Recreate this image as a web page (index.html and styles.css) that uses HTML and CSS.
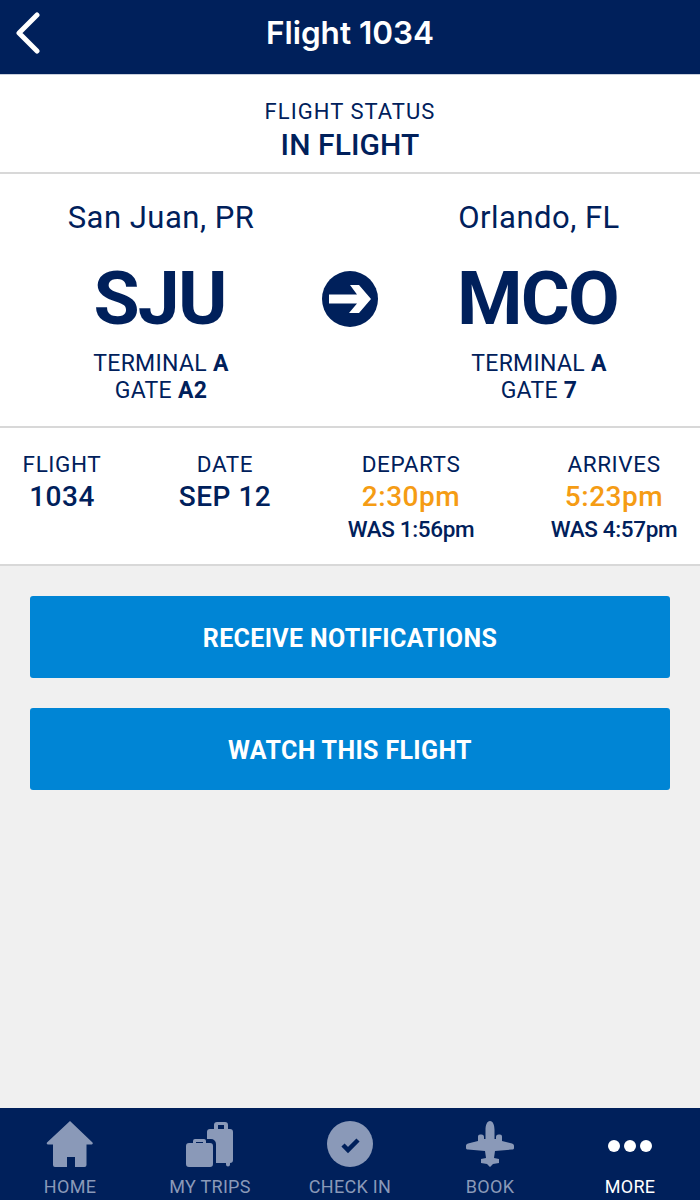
FILE: index.html
```html
<!DOCTYPE html>
<html lang="en">
<head>
<meta charset="utf-8">
<title>Flight 1034</title>
<link rel="stylesheet" href="styles.css">
</head>
<body>
<div class="app">
  <header class="topbar">
    <svg class="back" width="26" height="42" viewBox="0 0 26 42"><path d="M23 3 L5 21 L23 39" fill="none" stroke="#fff" stroke-width="5" stroke-linecap="round" stroke-linejoin="round"/></svg>
    <h1 class="title">Flight 1034</h1>
  </header>
  <section class="status">
    <div class="status-label">FLIGHT STATUS</div>
    <div class="status-value">IN FLIGHT</div>
  </section>
  <section class="route">
    <div class="place">
      <div class="city">San Juan, PR</div>
      <div class="code">SJU</div>
      <div class="gate">TERMINAL <b>A</b></div>
      <div class="gate">GATE <b>A2</b></div>
    </div>
    <svg class="arrow" width="56" height="56" viewBox="0 0 56 56"><circle cx="28" cy="28" r="28" fill="#00205b"/><path d="M7 23.500H35L28 14H37L49 28 37 42H27L35 32.500H7Z" fill="#fff"/></svg>
    <div class="place">
      <div class="city">Orlando, FL</div>
      <div class="code">MCO</div>
      <div class="gate">TERMINAL <b>A</b></div>
      <div class="gate">GATE <b>7</b></div>
    </div>
  </section>
  <section class="details">
    <div class="col col-flight">
      <div class="label">FLIGHT</div>
      <div class="value">1034</div>
    </div>
    <div class="col col-date">
      <div class="label">DATE</div>
      <div class="value">SEP 12</div>
    </div>
    <div class="col col-dep">
      <div class="label">DEPARTS</div>
      <div class="value late">2:30pm</div>
      <div class="was">WAS 1:56pm</div>
    </div>
    <div class="col col-arr">
      <div class="label">ARRIVES</div>
      <div class="value late">5:23pm</div>
      <div class="was">WAS 4:57pm</div>
    </div>
  </section>
  <main class="actions">
    <button class="btn">RECEIVE NOTIFICATIONS</button>
    <button class="btn">WATCH THIS FLIGHT</button>
  </main>
  <nav class="tabs">
    <div class="tab">
      <svg class="icon" width="50" height="48" viewBox="0 0 50 48"><path d="M25 1 47.500 22.500a1.200 1.200 0 0 1-1 2H41.500V45a2 2 0 0 1-2 2H30V37H22V47H10a2 2 0 0 1-2-2V24.500H3a1.200 1.200 0 0 1-1-2Z" fill="#8a99b8"/></svg>
      <span>HOME</span>
    </div>
    <div class="tab">
      <svg class="icon" width="50" height="48" viewBox="0 0 50 48"><path fill-rule="evenodd" d="M32 2h8a3 3 0 0 1 3 3v4h2a3 3 0 0 1 3 3v28a3 3 0 0 1-3 3v1.500a2 2 0 0 1-4 0V43H31V24a5 5 0 0 0-5-5h-4v-7a3 3 0 0 1 3-3h4V5a3 3 0 0 1 3-3Zm1 3v4h6V5Z" fill="#8a99b8"/><path fill-rule="evenodd" d="M8 23v-2a2 2 0 0 1 2-2h9a2 2 0 0 1 2 2v2h4a3 3 0 0 1 3 3v18a3 3 0 0 1-3 3H4a3 3 0 0 1-3-3V26a3 3 0 0 1 3-3Zm3-1v1h7v-1Z" fill="#8a99b8"/></svg>
      <span>MY TRIPS</span>
    </div>
    <div class="tab">
      <svg class="icon" width="50" height="48" viewBox="0 0 50 48"><circle cx="25" cy="24" r="23" fill="#8a99b8"/><path d="M18 25l5 5 10-10" fill="none" stroke="#00205b" stroke-width="4.500"/></svg>
      <span>CHECK IN</span>
    </div>
    <div class="tab">
      <svg class="icon" width="50" height="48" viewBox="0 0 50 48"><path d="M25 1C28 1 29.500 5 29.500 10V19H31V17a2.500 2.500 0 0 1 2.500-2.500H35a2 2 0 0 1 2 2V21L47 23.500C48.500 24 49 25 49 26V28C49 29 48 29.500 47 29.500L30 31 29 38 34 39V43L28 44 25 47 22 44 16 43V39L21 38 20 31 3 29.500C2 29.500 1 29 1 28V26C1 25 1.500 24 3 23.500L13 21V16.500a2 2 0 0 1 2-2H16.500A2.500 2.500 0 0 1 19 17V19H20.500V10C20.500 5 22 1 25 1Z" fill="#8a99b8"/></svg>
      <span>BOOK</span>
    </div>
    <div class="tab tab-active">
      <svg class="icon" width="50" height="48" viewBox="0 0 50 48"><circle cx="9" cy="26" r="6" fill="#fff"/><circle cx="25" cy="26" r="6" fill="#fff"/><circle cx="41" cy="26" r="6" fill="#fff"/></svg>
      <span>MORE</span>
    </div>
  </nav>
</div>
</body>
</html>
```
FILE: styles.css
```css
* { box-sizing: border-box; }
html, body { margin: 0; padding: 0; }
body { font-family: Roboto, "Liberation Sans", sans-serif; color: #00205b; background: #f0f0f0; }
.app { width: 700px; height: 1200px; display: flex; flex-direction: column; overflow: hidden; }

.topbar { height: 75px; background: #00205b; position: relative; display: flex; align-items: center; justify-content: center; border-bottom: 1px solid #c9cfdc; flex: none; }
.back { position: absolute; left: 14px; top: 12px; }
.title { margin: 0; font-family: Inter, sans-serif; font-size: 31.500px; font-weight: 600; color: #fff; line-height: 1; padding-bottom: 9px; }

.status { height: 99px; background: #fff; border-bottom: 2px solid #d8d8d8; text-align: center; padding-top: 24px; flex: none; }
.status-label { font-size: 22px; line-height: 26px; letter-spacing: 1.050px; }
.status-value { font-size: 30px; line-height: 36px; font-weight: 500; letter-spacing: .1px; margin-top: 2px; }

.route { height: 254px; background: #fff; border-bottom: 2px solid #d8d8d8; display: flex; flex: none; justify-content: space-between; }
.place { width: 322px; text-align: center; padding-top: 25px; }
.city { font-size: 31px; line-height: 38px; letter-spacing: .5px; }
.code { font-size: 75px; line-height: 84px; font-weight: 700; margin-top: 19px; letter-spacing: -1.800px; padding-right: 3px; }
.gate { font-size: 23px; line-height: 27px; letter-spacing: .3px; }
.code + .gate { margin-top: 10px; }
.gate b { font-weight: 700; }
.arrow { align-self: flex-start; margin-top: 97px; flex: none; }

.details { height: 138px; background: #fff; border-bottom: 2px solid #d8d8d8; display: flex; flex: none; padding-top: 23px; }
.col { text-align: center; flex: none; }
.col-flight { width: 124px; }
.col-date { width: 202px; }
.col-dep { width: 170px; }
.col-arr { width: 156px; margin-left: 40px; }
.label { font-size: 22.500px; line-height: 26px; letter-spacing: .6px; }
.value { font-size: 28px; line-height: 36px; font-weight: 500; letter-spacing: .5px; margin-top: 2px; }
.late { color: #f59c14; }
.was { font-size: 22.500px; line-height: 28px; font-weight: 500; letter-spacing: -.35px; }

.actions { flex: 1; display: flex; flex-direction: column; gap: 30px; padding: 30px 30px 0; background: #f0f0f0; }
.btn { height: 82px; border: 0; border-radius: 3px; background: #0085d5; color: #fff; font-family: Roboto, sans-serif; font-size: 25px; font-weight: 700; letter-spacing: .35px; padding: 2px 0 0; }

.tabs { height: 92px; background: #00205b; display: flex; flex: none; padding-top: 12px; }
.tab { width: 140px; display: flex; flex-direction: column; align-items: center; color: #8a99b8; font-size: 18px; line-height: 24px; letter-spacing: .3px; }
.tab .icon { display: block; margin-bottom: 7px; }
.tab-active { color: #fff; }
```
